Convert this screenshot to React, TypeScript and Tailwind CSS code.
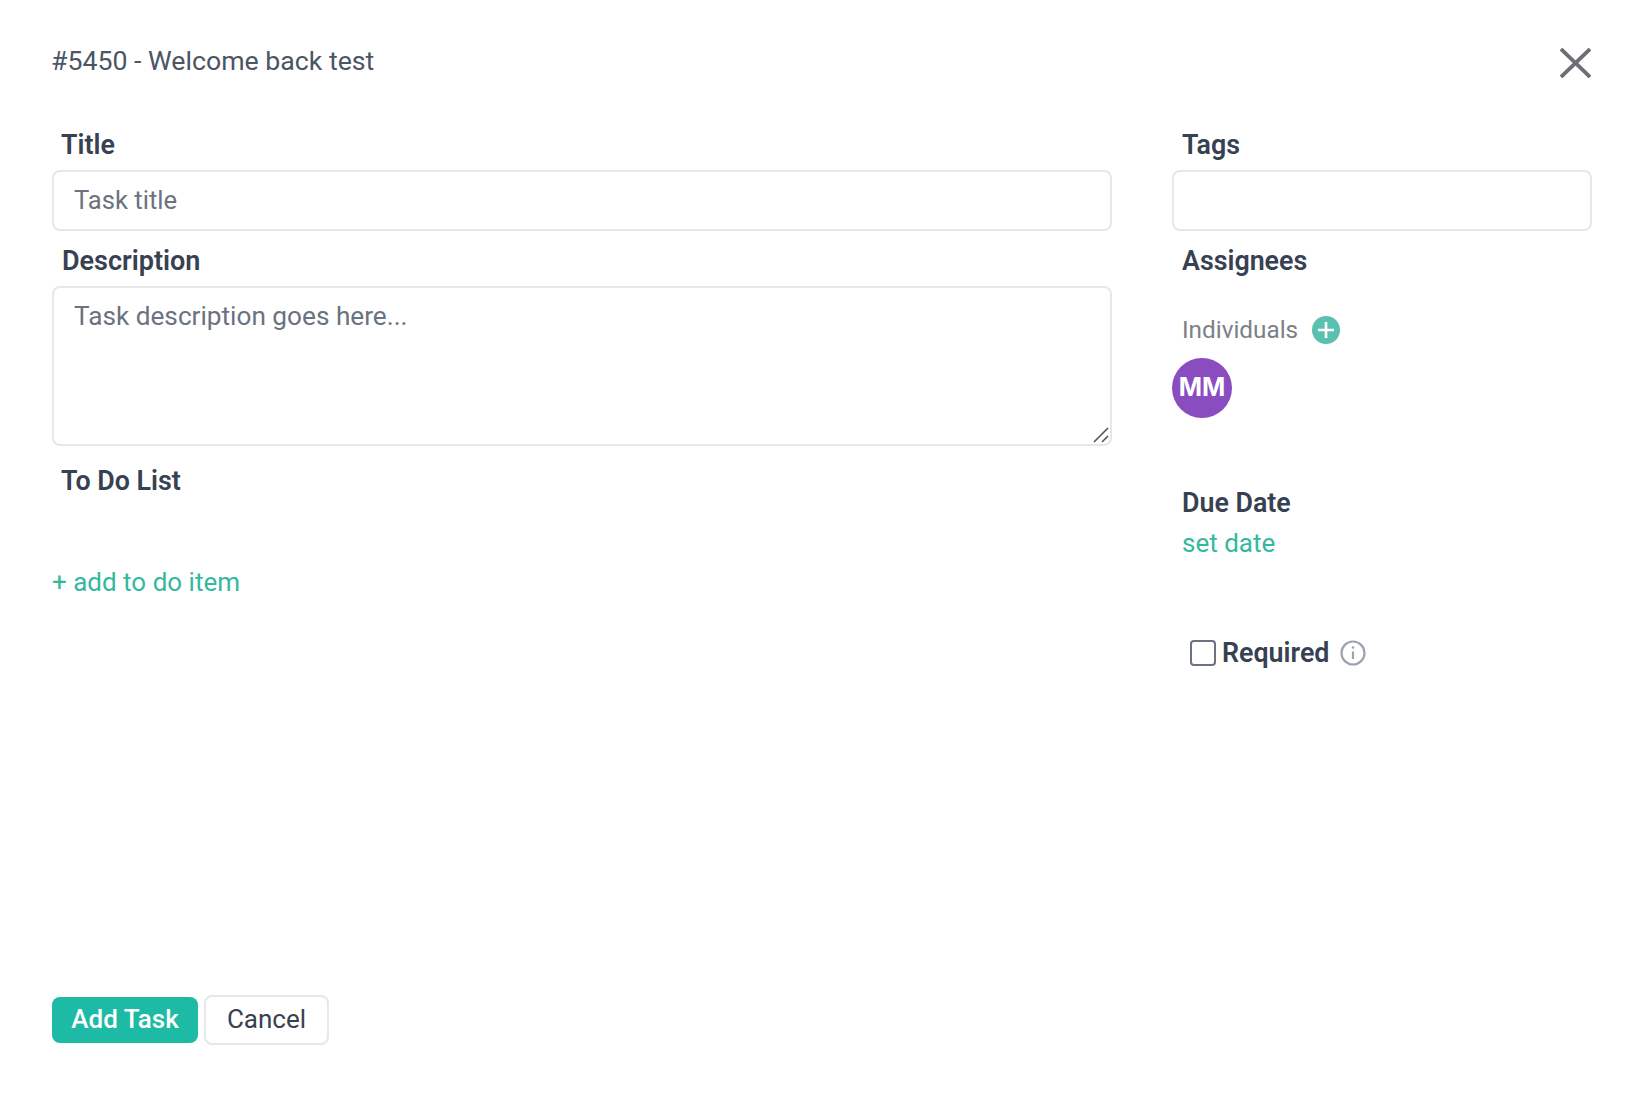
export default function App() {
  return (
    <main className="min-h-[1093px] bg-white font-[Roboto,sans-serif] text-[26px] text-[#374151] flex flex-col pl-[52px] pr-[35px]">
      {/* header */}
      <div className="h-[114px] flex items-start justify-between shrink-0">
        <h1 className="mt-[43px] -ml-[1px] text-[26.7px] leading-[36px] font-normal text-[#4b5563]">#5450 - Welcome back test</h1>
        <button className="mt-[48px] mr-[1px] text-[#6c7074]" aria-label="Close">
          <svg width="31" height="30" viewBox="0 0 31 30" fill="none" stroke="currentColor" strokeWidth="3.8">
            <path d="M1 1l29 28M30 1L1 29" />
          </svg>
        </button>
      </div>

      <div className="flex gap-[60px] flex-1">
        {/* left column */}
        <div className="w-[1060px] flex flex-col">
          <label className="h-14 pt-[13px] pl-[9px] text-[26.8px] font-semibold leading-[36px]">Title</label>
          <input
            placeholder="Task title"
            className="h-[61px] rounded-lg border-2 border-[#e5e7eb] px-[20px] pb-[2px] text-[25.6px] outline-none placeholder:text-[#6b7280]"
          />
          <label className="h-[55px] pt-[12px] pl-[10px] text-[27px] font-semibold leading-[36px]">Description</label>
          <div className="relative h-[160px]">
            <textarea
              placeholder="Task description goes here..."
              className="block w-full h-full resize-none rounded-lg border-2 border-[#e5e7eb] px-[20px] py-[10px] text-[26.2px] leading-[36px] outline-none placeholder:text-[#6b7280]"
            />
            <svg className="absolute right-[2px] bottom-[2px]" width="18" height="18" viewBox="0 0 18 18" stroke="#555" strokeWidth="1.6">
              <path d="M2 16L16 2M10 16l6-6" />
            </svg>
          </div>
          <label className="mt-[9px] h-14 pl-[9px] pt-[8px] text-[26.8px] font-semibold leading-[36px]">To Do List</label>
          <a className="mt-[53px] leading-[36px] text-[#34b8a0]">+ add to do item</a>
        </div>

        {/* right column */}
        <div className="w-[420px] flex flex-col">
          <label className="h-14 pt-[13px] pl-[10px] text-[26.8px] font-semibold leading-[36px]">Tags</label>
          <input className="h-[61px] rounded-lg border-2 border-[#e5e7eb] px-5 outline-none" />
          <label className="h-[55px] pt-[12px] pl-[10px] text-[26.8px] font-semibold leading-[36px]">Assignees</label>
          <div className="mt-[30px] flex items-center pl-[10px] gap-[14px] h-[28px]">
            <span className="text-[24.3px] text-[#7b8087]">Individuals</span>
            <span className="w-7 h-7 rounded-full bg-[#5cc0b0] flex items-center justify-center">
              <svg width="18" height="18" viewBox="0 0 18 18" stroke="#fff" strokeWidth="2.6">
                <path d="M9 1v16M1 9h16" />
              </svg>
            </span>
          </div>
          <div className="mt-[14px] w-[60px] h-[60px] rounded-full bg-[#8a4dbf] text-white font-[Inter,sans-serif] text-[25px] font-bold flex items-center justify-center">
            MM
          </div>
          <div className="mt-[67px] pl-[10px] text-[26.8px] font-semibold leading-[36px]">Due Date</div>
          <a className="mt-[4px] pl-[10px] leading-[36px] text-[#34b8a0]">set date</a>
          <div className="mt-[74px] pl-[18px] flex items-center h-[36px]">
            <span className="w-[26px] h-[26px] rounded border-2 border-[#6b7280] bg-white" />
            <span className="ml-[6px] text-[26.8px] font-semibold">Required</span>
            <svg className="ml-[11px] text-[#9ca3af]" width="26" height="26" viewBox="0 0 26 26" fill="none" stroke="currentColor" strokeWidth="2.2">
              <circle cx="13" cy="13" r="11.5" />
              <path d="M13 11.5v7.5" />
              <circle cx="13" cy="7.5" r="1.3" fill="currentColor" stroke="none" />
            </svg>
          </div>
        </div>
      </div>

      {/* footer */}
      <div className="flex items-center gap-[6px] mb-[48px] shrink-0">
        <button className="w-[146px] h-[46px] pb-[2px] rounded-lg bg-[#1dbaa5] text-white font-medium">Add Task</button>
        <button className="w-[125px] h-[50px] pb-[2px] rounded-lg border-2 border-[#e5e7eb] bg-white">Cancel</button>
      </div>
    </main>
  );
}
